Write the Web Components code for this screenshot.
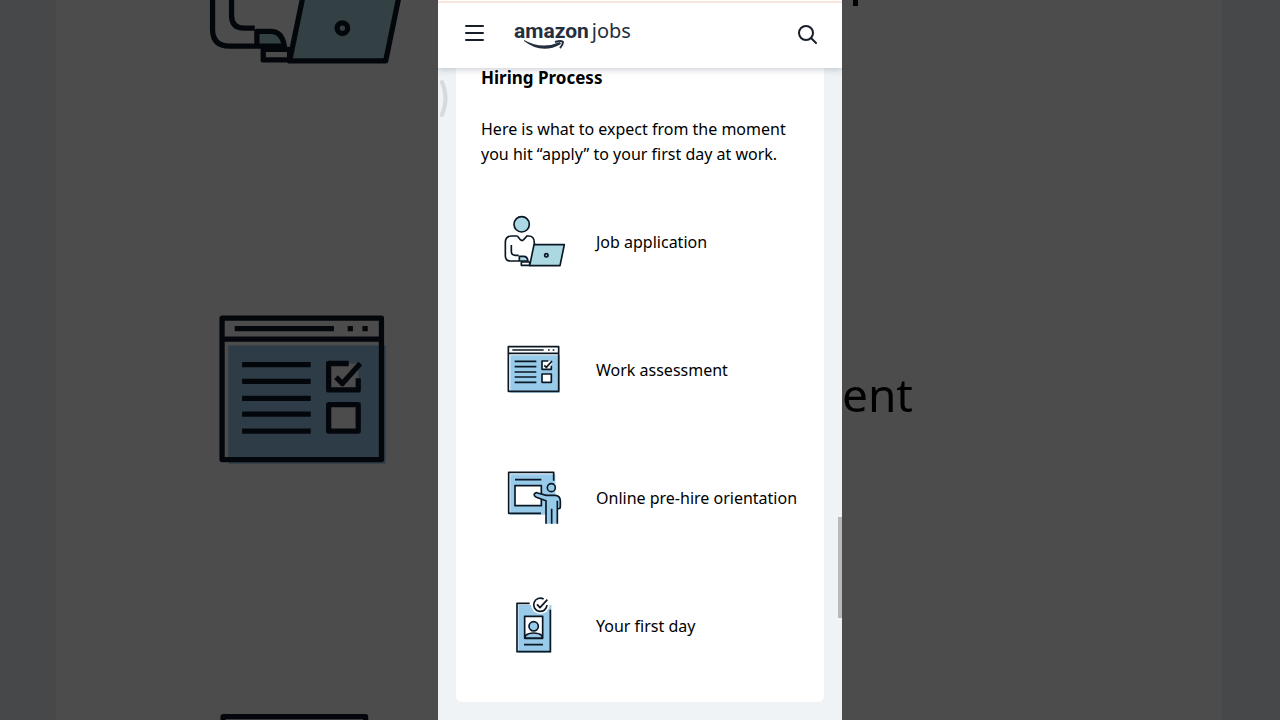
<!DOCTYPE html>
<html lang="en">
<head>
<meta charset="utf-8">
<meta name="viewport" content="width=device-width, initial-scale=1">
<title>Amazon Jobs - Hiring Process</title>
<style>
  html, body { margin: 0; height: 100%; }
  body { font-family: "Noto Sans", "Open Sans", sans-serif; color: #000; background: #4b4b4b; overflow: hidden; }
</style>
</head>
<body>
<jobs-stage>
  <side-backdrop slot="left" side="left"></side-backdrop>
  <mobile-page>
    <jobs-header slot="header"></jobs-header>
    <process-card heading="Hiring Process">
      <span slot="intro">Here is what to expect from the moment you hit “apply” to your first day at work.</span>
      <process-step icon="laptop">Job application</process-step>
      <process-step icon="form">Work assessment</process-step>
      <process-step icon="board">Online pre-hire orientation</process-step>
      <process-step icon="badge">Your first day</process-step>
    </process-card>
  </mobile-page>
  <side-backdrop slot="right" side="right"></side-backdrop>
</jobs-stage>

<script>
const ICONS = {
  laptop: `<svg viewBox="0 6 270 210">
    <circle cx="95" cy="58" r="23" fill="#acd8e4"/>
    <path d="M82 93H66Q46 93 46 113V152Q46 168 62 168H87M108 93H116Q133 93 133 113V119M82 93L91 104Q96 109 101 104L111 93M64 120V139Q64 151 76 151H86"/>
    <path d="M88 154H101Q112 154 114 168H88Z" fill="#acd8e4"/>
    <path d="M94 171H119V181H94Z" fill="#fff"/>
    <path d="M132 119H223L210 182H119Z" fill="#acd8e4"/>
    <circle cx="169" cy="151" r="5"/></svg>`,
  form: `<svg viewBox="0 0 270 210">
    <path d="M61 61H210V173H61Z" fill="#98caea" stroke="none"/>
    <path d="M55 35H206V169H55ZM55 55H206M67 45H161M174 45H179M188 45H193"/>
    <path d="M74 79H139M74 95H139M74 111H139M74 126H139M74 142H139"/>
    <path d="M156 78H184V103H156ZM156 117H184V142H156Z" fill="#fff" stroke="none"/>
    <path d="M175 78H156V103H184V92M163 91L169 97L186 78M156 117H184V142H156Z"/></svg>`,
  board: `<svg viewBox="0 9 270 210">
    <path d="M61 43H196V164H61Z" fill="#98caea" stroke="none"/>
    <path d="M75 77H154V137H75Z" fill="#fff"/>
    <path d="M153 160H56V37H191V62M75 59H154" />
    <path d="M168 191V122L139 112Q128 104 138 98L169 106H197Q211 108 211 123V140Q211 147 202 146V191Z" fill="#98caea" stroke="none"/>
    <path d="M168 191V122L139 112Q131 108 133 102Q137 96 143 99L169 106H197Q211 108 211 123V140Q211 147 202 147M202 122V191M185 146V191"/>
    <circle cx="184" cy="83" r="12" fill="#98caea"/></svg>`,
  badge: `<svg viewBox="0 3 270 210">
    <path d="M85 45H184V188H85Z" fill="#98caea" stroke="none"/>
    <circle cx="151" cy="44" r="28" fill="#fff" stroke="none"/>
    <path d="M119 40H81V185H181V59M102 164H159"/>
    <path d="M104 79H158V145H104Z" fill="#fff"/>
    <path d="M106 144V137Q115 129 131 129T156 137V144Z" fill="#98caea"/>
    <circle cx="131" cy="109" r="14" fill="#98caea"/>
    <path d="M161 27A20 20 0 1 0 171 45M141 43L150 53L172 29"/></svg>`
};
const iconStyle = `svg { display: block; fill: none; stroke: #0b1824; stroke-width: 5; stroke-linejoin: round; stroke-linecap: butt; }`;

function define(name, render) {
  customElements.define(name, class extends HTMLElement {
    connectedCallback() {
      if (!this.shadowRoot) this.attachShadow({ mode: "open" }).innerHTML = render(this);
    }
  });
}

define("jobs-stage", () => `
  <style>
    :host { display: grid; grid-template-columns: minmax(0, 1fr) minmax(auto, 404px) minmax(0, 1fr); min-height: 100%; }
  </style>
  <slot name="left"></slot><slot></slot><slot name="right"></slot>`);

define("side-backdrop", el => el.getAttribute("side") === "left" ? `
  <style>
    :host { display: block; contain: size; overflow: hidden; background: #eff3f6; filter: brightness(0.298); }
    .sheet { margin-left: 56px; min-height: 100%; background: #fff; display: flow-root; }
    .icons { display: flex; flex-direction: column; align-items: flex-end; gap: 184px; margin-top: -125px; }
    .icons svg { width: 285px; height: 222px; margin-right: -11px; }
    ${iconStyle}
  </style>
  <div class="sheet" aria-hidden="true"><div class="icons">${ICONS.laptop}${ICONS.form}${ICONS.board}</div></div>` : `
  <style>
    :host { display: block; contain: size; overflow: hidden; background: #eff3f6; filter: brightness(0.298); }
    .sheet { margin-right: 58px; min-height: 100%; background: #fff; display: flow-root; }
    .stem { width: 5px; height: 6px; margin-left: 11px; background: #000; }
    .label { margin-top: 352px; font-size: 46px; line-height: 72px; }
  </style>
  <div class="sheet" aria-hidden="true"><div class="stem"></div><div class="label">ent</div></div>`);

define("mobile-page", () => `
  <style>
    :host { display: block; position: relative; background: #eff3f6; overflow: hidden; padding-bottom: 18px; }
    main { padding: 0 18px; }
    .handle { position: absolute; left: 0; top: 78px; }
    .thumb { position: absolute; right: 0; top: 517px; width: 4px; height: 101px; background: #b8babc; }
  </style>
  <slot name="header"></slot>
  <main><slot></slot></main>
  <svg class="handle" width="12" height="40" aria-hidden="true"><path d="M4 4Q11 20 4 37" fill="none" stroke="#d7dadd" stroke-width="4" stroke-linecap="round"/></svg>
  <div class="thumb"></div>`);

define("jobs-header", () => `
  <style>
    :host { display: block; position: relative; z-index: 1; background: #fff; box-shadow: 0 1px 7px rgba(20, 30, 60, .25); }
    header { display: flex; align-items: center; height: 68px; padding: 0 22px 0 24px; box-sizing: border-box;
      background: linear-gradient(#fff 1px, #fae4de 1px, #fae4de 3px, #fff 3px); }
    button { padding: 0; border: 0; background: none; display: block; cursor: pointer; }
    button svg { display: block; fill: none; stroke: #161e2a; stroke-width: 2; stroke-linecap: round; }
    a { display: flex; align-items: baseline; gap: 3px; position: relative; margin: 0 auto 0 28px; padding-bottom: 6px;
      color: #232f3e; text-decoration: none; line-height: 28px; }
    .brand { font-family: Roboto, sans-serif; font-weight: 700; font-size: 21px; }
    .jobs { font-size: 20px; }
    a svg { position: absolute; left: 10px; top: 22px; }
  </style>
  <header>
    <button type="button" aria-label="Menu"><svg width="24" height="24"><path d="M4 4H21M4 11H21M4 18H21"/></svg></button>
    <a href="#" aria-label="amazon jobs"><span class="brand">amazon</span><span class="jobs">jobs</span>
      <svg width="42" height="14" viewBox="0 0 42 14" aria-hidden="true"><path d="M0 1Q18 11 36 3L37 5Q18 16 0 2Z" fill="#232f3e"/><path d="M31 3Q38 1 39 3Q39 6 36 9" fill="none" stroke="#232f3e" stroke-width="2"/></svg></a>
    <button type="button" aria-label="Search"><svg width="24" height="24"><circle cx="10" cy="11" r="7"/><path d="M15 16L20 21"/></svg></button>
  </header>`);

define("process-card", el => `
  <style>
    :host { display: block; background: #fff; border-radius: 0 0 6px 6px; padding: 0 24px 12px 25px; }
    h2 { margin: 0; font-size: 17px; line-height: 20px; font-weight: 700; }
    p { margin: 29px 0 11px; font-size: 16px; line-height: 25px; }
    div { display: flex; flex-direction: column; }
  </style>
  <h2>${el.getAttribute("heading")}</h2>
  <p><slot name="intro"></slot></p>
  <div role="list"><slot></slot></div>`);

define("process-step", el => {
  el.setAttribute("role", "listitem");
  return `
  <style>
    :host { display: flex; align-items: center; gap: 16px; height: 128px; padding-left: 9px; font-size: 16px; line-height: 24px; white-space: nowrap; }
    svg { width: 90px; height: 70px; flex: none; }
    ${iconStyle}
  </style>
  ${ICONS[el.getAttribute("icon")]}<span><slot></slot></span>`;
});
</script>
</body>
</html>
